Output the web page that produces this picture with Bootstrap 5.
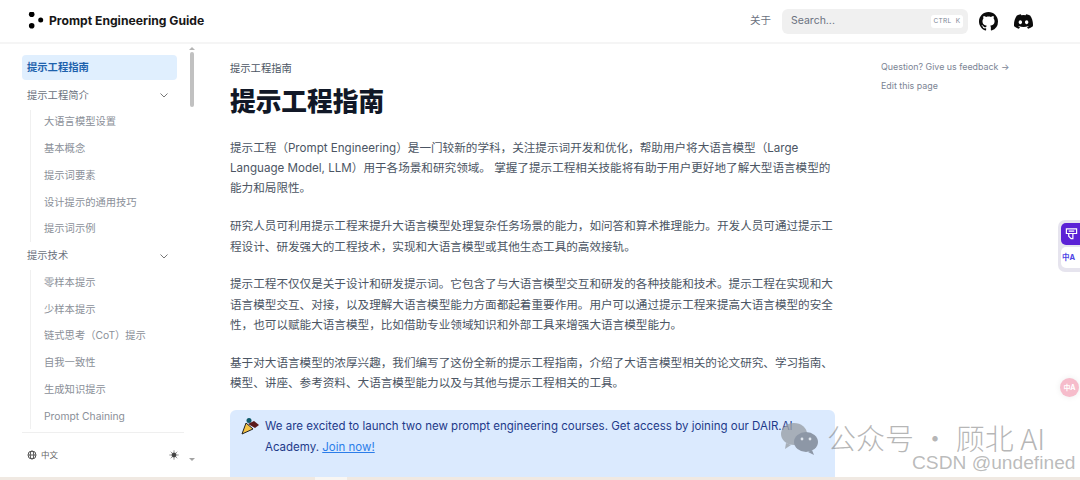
<!DOCTYPE html>
<html lang="zh">
<head>
  <meta charset="UTF-8" />
  <title>提示工程指南</title>
  <link href="https://cdn.jsdelivr.net/npm/bootstrap@5.3.3/dist/css/bootstrap.min.css" rel="stylesheet" />
  <style>
    html, body { height: 480px; overflow: hidden; }
    body { font-family: Inter, "Noto Sans CJK SC", sans-serif; color: #4b5563; background: #fff; font-size: 13px; position: relative; }
    .top-bar { height: 44px; border-bottom: 2px solid #f5f5f5; padding: 0 47px 0 28px; }
    .brand-dots { width: 18px; height: 18px; }
    .brand-name { font-size: 12.15px; font-weight: 700; color: #171717; margin-left: 3px; }
    .about-link { font-size: 10.5px; color: #6b7280; margin-right: 11px; }
    .search-box { width: 186px; height: 25px; background: #f0f0f0; border-radius: 6px; padding: 0 5px 0 9px; font-size: 10.5px; color: #6b7280; margin-right: 11px; }
    .key-hint { background: #fff; border-radius: 3px; font-size: 6.5px; letter-spacing: .3px; height: 13px; line-height: 13px; color: #7b8494; width: 32px; flex: none; text-align: center; white-space: nowrap; }
    .top-icon { width: 19px; height: 19px; fill: #0b0b0b; }
    .page-body { height: 433px; }
    .side-col { width: 195px; flex: none; position: relative; padding: 11px 0 0 22px; }
    .side-item { width: 155px; height: 25px; margin-bottom: 1.75px; padding: 0 5px; font-size: 10.3px; color: #6b7280; border-radius: 4px; }
    .side-item.is-current { background: #e0effe; color: #1d62ad; font-weight: 700; padding-top: 1px; margin-bottom: 2.75px; }
    .side-item svg { width: 10px; height: 10px; margin-right: 3px; }
    .side-sub { margin-left: 8px; border-left: 1px solid #f0f0f0; }
    .side-sub .side-item { padding-left: 13px; width: 147px; color: #8a8f98; }
    .side-thumb { position: absolute; left: 190px; top: 8px; width: 4px; height: 55px; background: #c1c1c1; border-radius: 2px; }
    .thumb-arrow { position: absolute; left: 189px; top: 0; width: 0; height: 0; border: 3px solid transparent; border-bottom: 3px solid #b5b5b5; }
    .side-foot { position: absolute; left: 22px; top: 388px; width: 162px; height: 45px; border-top: 1px solid #efefef; padding: 0 5px; font-size: 8.5px; color: #666; }
    .side-foot svg { width: 10px; height: 10px; }
    .foot-arrow { position: absolute; left: 189px; top: 414px; width: 0; height: 0; border: 3px solid transparent; border-top: 3px solid #a3a3a3; }
    .main-col { width: 605px; margin-left: 35px; flex: none; padding-top: 16px; }
    .crumb { font-size: 10.3px; color: #4b5563; line-height: 16px; }
    .page-title { font-size: 25.7px; font-weight: 800; color: #111827; line-height: 34px; margin: 9px 0 19px; }
    .main-col p { line-height: 20.2px; margin-bottom: 17.7px; font-size: 11.6px; color: #4b5563; }
    .note-box { background: #dbeafe; border-radius: 6px; height: 90px; margin-top: -1px; padding: 6px 10px; color: #1e3a8a; font-size: 11.5px; line-height: 20.8px; }
    .note-box a { color: #2b7de9; }
    .note-icon { width: 20px; height: 20px; flex: none; margin-right: 5px; }
    .toc-col { margin-left: 46px; padding-top: 13px; font-size: 8.9px; color: #7b8494; line-height: 19px; }
    .bottom-strip { position: absolute; left: 0; right: 0; top: 477px; height: 3px; background: #f0e9e2; }
    .strip-gap { width: 32px; height: 3px; margin-left: 315px; background: #f8f6f3; }
    .float-pill { position: absolute; left: 1058px; top: 220px; width: 22px; height: 52px; background: #e6e4ee; border-radius: 7px 0 0 7px; padding: 3px 0 0 3px; }
    .float-btn { width: 19px; height: 22px; border-radius: 5px 0 0 5px; background: #5b21d6; margin-bottom: 2px; padding-left: 4px; line-height: 1; }
    .float-btn.is-light { height: 21px; background: #fff; color: #4f46e5; font-size: 7.5px; font-weight: 700; line-height: 21px; padding-left: 1px; white-space: nowrap; }
    .float-btn svg { width: 13px; height: 13px; margin-top: 4px; }
    .float-pink { position: absolute; left: 1060px; top: 378px; width: 19px; height: 19px; border-radius: 50%; background: #f6bccb; color: #fff; font-size: 7px; font-weight: 700; text-align: center; line-height: 19px; box-shadow: 0 0 6px rgba(0,0,0,.08); white-space: nowrap; }
    .mark-row { position: absolute; left: 780px; top: 418px; color: rgba(110,110,110,.5); font-family: "Noto Sans CJK SC", sans-serif; font-size: 29px; font-weight: 300; line-height: 32px; white-space: nowrap; }
    .mark-row svg { width: 40px; height: 34px; margin-right: 7px; margin-top: 3px; }
    .mark-line { position: absolute; left: 912px; top: 453px; color: rgba(130,130,130,.55); font-family: "Liberation Sans", sans-serif; font-size: 19.2px; line-height: 20px; white-space: nowrap; }
  </style>
</head>
<body>
  <header class="top-bar d-flex align-items-center">
    <svg class="brand-dots" viewBox="0 0 18 18"><circle cx="3.7" cy="2.3" r="2.8" fill="#000"/><circle cx="3.7" cy="13.7" r="2.8" fill="#000"/><circle cx="12.7" cy="8" r="2.5" fill="#000"/></svg>
    <span class="brand-name">Prompt Engineering Guide</span>
    <div class="ms-auto d-flex align-items-center">
      <span class="about-link">关于</span>
      <div class="search-box d-flex align-items-center justify-content-between">
        <span>Search...</span>
        <span class="key-hint">CTRL&nbsp; K</span>
      </div>
      <svg class="top-icon me-3" viewBox="0 0 16 16"><path d="M8 0C3.58 0 0 3.58 0 8c0 3.54 2.29 6.53 5.47 7.59.4.07.55-.17.55-.38 0-.19-.01-.82-.01-1.49-2.01.37-2.53-.49-2.69-.94-.09-.23-.48-.94-.82-1.13-.28-.15-.68-.52-.01-.53.63-.01 1.08.58 1.23.82.72 1.21 1.87.87 2.33.66.07-.52.28-.87.51-1.07-1.78-.2-3.64-.89-3.64-3.95 0-.87.31-1.59.82-2.15-.08-.2-.36-1.02.08-2.12 0 0 .67-.21 2.2.82.64-.18 1.32-.27 2-.27.68 0 1.36.09 2 .27 1.53-1.04 2.2-.82 2.2-.82.44 1.1.16 1.92.08 2.12.51.56.82 1.27.82 2.15 0 3.07-1.87 3.75-3.65 3.95.29.25.54.73.54 1.48 0 1.07-.01 1.93-.01 2.2 0 .21.15.46.55.38A8.012 8.012 0 0 0 16 8c0-4.42-3.58-8-8-8z"/></svg>
      <svg class="top-icon" viewBox="0 0 16 16"><path d="M13.545 2.907a13.227 13.227 0 0 0-3.257-1.011.05.05 0 0 0-.052.025c-.141.25-.297.577-.406.833a12.19 12.19 0 0 0-3.658 0 8.258 8.258 0 0 0-.412-.833.051.051 0 0 0-.052-.025c-1.125.194-2.22.534-3.257 1.011a.041.041 0 0 0-.021.018C.356 6.024-.213 9.047.066 12.032c.001.014.01.028.021.037a13.276 13.276 0 0 0 3.995 2.02.05.05 0 0 0 .056-.019c.308-.42.582-.863.818-1.329a.05.05 0 0 0-.01-.059.051.051 0 0 0-.018-.011 8.875 8.875 0 0 1-1.248-.595.05.05 0 0 1-.02-.066.051.051 0 0 1 .015-.019c.084-.063.168-.129.248-.195a.05.05 0 0 1 .051-.007c2.619 1.196 5.454 1.196 8.041 0a.052.052 0 0 1 .053.007c.08.066.164.132.248.195a.051.051 0 0 1-.004.085 8.254 8.254 0 0 1-1.249.594.05.05 0 0 0-.03.03.052.052 0 0 0 .003.041c.24.465.515.909.817 1.329a.05.05 0 0 0 .056.019 13.235 13.235 0 0 0 4.001-2.02.049.049 0 0 0 .021-.037c.334-3.451-.559-6.449-2.366-9.106a.034.034 0 0 0-.02-.019Zm-8.198 7.307c-.789 0-1.438-.724-1.438-1.612 0-.889.637-1.613 1.438-1.613.807 0 1.45.73 1.438 1.613 0 .888-.637 1.612-1.438 1.612Zm5.316 0c-.788 0-1.438-.724-1.438-1.612 0-.889.637-1.613 1.438-1.613.807 0 1.451.73 1.438 1.613 0 .888-.631 1.612-1.438 1.612Z"/></svg>
    </div>
  </header>

  <div class="page-body d-flex overflow-hidden">
    <aside class="side-col">
      <div class="side-item is-current d-flex align-items-center">提示工程指南</div>
      <div class="side-item d-flex align-items-center justify-content-between">提示工程简介
        <svg viewBox="0 0 10 10" fill="none" stroke="#777" stroke-width="1"><path d="M1.5 3.5 5 7l3.5-3.5"/></svg>
      </div>
      <div class="side-sub">
        <div class="side-item d-flex align-items-center">大语言模型设置</div>
        <div class="side-item d-flex align-items-center">基本概念</div>
        <div class="side-item d-flex align-items-center">提示词要素</div>
        <div class="side-item d-flex align-items-center">设计提示的通用技巧</div>
        <div class="side-item d-flex align-items-center">提示词示例</div>
      </div>
      <div class="side-item d-flex align-items-center justify-content-between">提示技术
        <svg viewBox="0 0 10 10" fill="none" stroke="#777" stroke-width="1"><path d="M1.5 3.5 5 7l3.5-3.5"/></svg>
      </div>
      <div class="side-sub">
        <div class="side-item d-flex align-items-center">零样本提示</div>
        <div class="side-item d-flex align-items-center">少样本提示</div>
        <div class="side-item d-flex align-items-center">链式思考（CoT）提示</div>
        <div class="side-item d-flex align-items-center">自我一致性</div>
        <div class="side-item d-flex align-items-center">生成知识提示</div>
        <div class="side-item d-flex align-items-center">Prompt Chaining</div>
      </div>
      <div class="thumb-arrow"></div>
      <div class="side-thumb"></div>
      <div class="side-foot d-flex align-items-center justify-content-between bg-white">
        <span class="d-flex align-items-center gap-1">
          <svg viewBox="0 0 10 10" fill="none" stroke="#555" stroke-width="1"><circle cx="5" cy="5" r="4"/><ellipse cx="5" cy="5" rx="1.8" ry="4"/><path d="M1 5h8"/></svg>
          <span>中文</span>
        </span>
        <svg viewBox="0 0 10 10" fill="#444" stroke="#444" stroke-width=".8"><circle cx="5" cy="5" r="2.2"/><path d="M5 .5v1.2M5 8.3v1.2M.5 5h1.2M8.3 5h1.2M1.8 1.8l.9.9M7.3 7.3l.9.9M8.2 1.8l-.9.9M2.7 7.3l-.9.9"/></svg>
      </div>
      <div class="foot-arrow"></div>
    </aside>

    <main class="main-col">
      <div class="crumb">提示工程指南</div>
      <h1 class="page-title">提示工程指南</h1>
      <p>提示工程（Prompt Engineering）是一门较新的学科，关注提示词开发和优化，帮助用户将大语言模型（Large Language Model, LLM）用于各场景和研究领域。 掌握了提示工程相关技能将有助于用户更好地了解大型语言模型的能力和局限性。</p>
      <p>研究人员可利用提示工程来提升大语言模型处理复杂任务场景的能力，如问答和算术推理能力。开发人员可通过提示工程设计、研发强大的工程技术，实现和大语言模型或其他生态工具的高效接轨。</p>
      <p>提示工程不仅仅是关于设计和研发提示词。它包含了与大语言模型交互和研发的各种技能和技术。提示工程在实现和大语言模型交互、对接，以及理解大语言模型能力方面都起着重要作用。用户可以通过提示工程来提高大语言模型的安全性，也可以赋能大语言模型，比如借助专业领域知识和外部工具来增强大语言模型能力。</p>
      <p>基于对大语言模型的浓厚兴趣，我们编写了这份全新的提示工程指南，介绍了大语言模型相关的论文研究、学习指南、模型、讲座、参考资料、大语言模型能力以及与其他与提示工程相关的工具。</p>
      <div class="note-box d-flex">
        <svg class="note-icon" viewBox="0 0 20 20"><path d="M2 18 6 7l7 6z" fill="#f6c445" stroke="#222" stroke-width="1"/><circle cx="9" cy="4.5" r="2.5" fill="#0e5a6b"/><path d="M8 8l6-3 5 4-4 3z" fill="#5c1a1a"/></svg>
        <div>We are excited to launch two new prompt engineering courses. Get access by joining our DAIR.AI Academy. <a href="#">Join now!</a></div>
      </div>
    </main>

    <div class="toc-col">
      <div>Question? Give us feedback →</div>
      <div>Edit this page</div>
    </div>
  </div>

  <div class="bottom-strip"><div class="strip-gap"></div></div>

  <div class="float-pill">
    <div class="float-btn"><svg viewBox="0 0 14 14" fill="none" stroke="#fff" stroke-width="1.3"><path d="M1.5 2h11v5h-11zM4 7v3l2.5 2.5h2V7M4 4.5h6"/></svg></div>
    <div class="float-btn is-light">中A</div>
  </div>
  <div class="float-pink">中A</div>

  <div class="mark-row d-flex align-items-center">
    <svg viewBox="0 0 40 34" fill="#8d97a6"><ellipse cx="14" cy="13" rx="13" ry="11" fill="#9aa0a8" fill-opacity=".8"/><path d="M6 22l-1 6 6-4z" fill="#9aa0a8" fill-opacity=".8"/><ellipse cx="26" cy="21" rx="12" ry="10"/><path d="M32 29l2 5-6-3z"/><circle cx="22" cy="18" r="1.4" fill="#dfe5ec"/><circle cx="30" cy="18" r="1.4" fill="#dfe5ec"/></svg>
    <span>公众号 · 顾北 AI</span>
  </div>
  <div class="mark-line">CSDN @undefined</div>

  <script src="https://cdn.jsdelivr.net/npm/bootstrap@5.3.3/dist/js/bootstrap.bundle.min.js"></script>
</body>
</html>
